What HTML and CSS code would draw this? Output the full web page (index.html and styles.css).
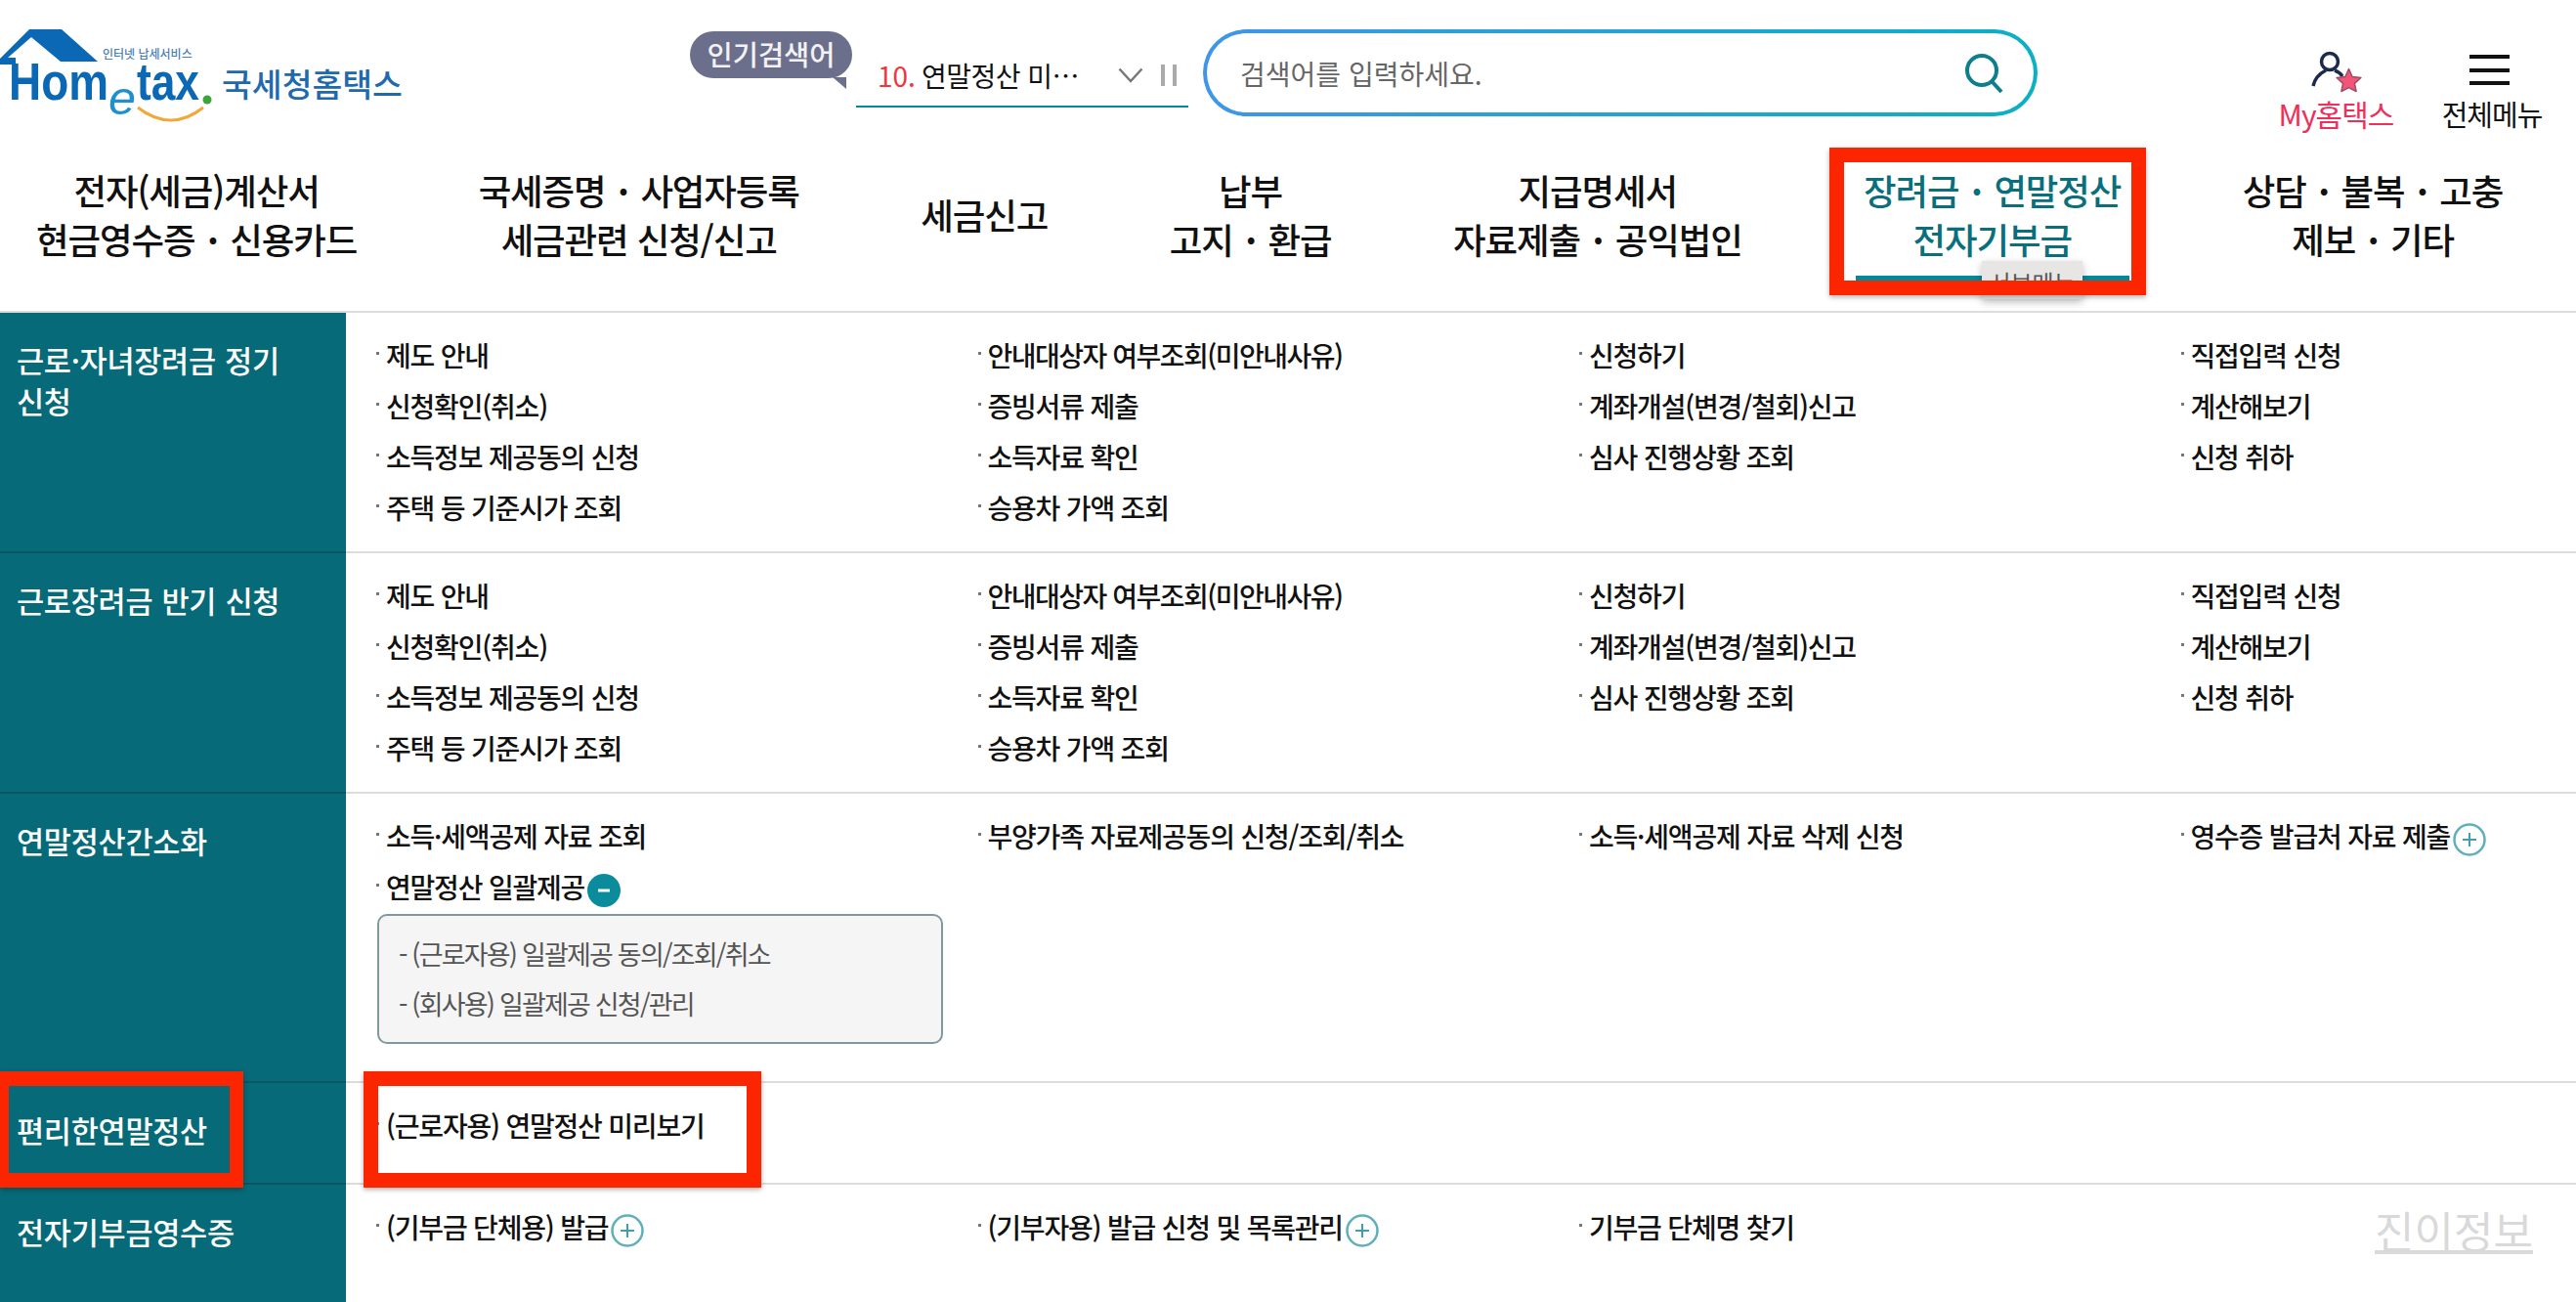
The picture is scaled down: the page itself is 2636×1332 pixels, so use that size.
FILE: index.html
```html
<!DOCTYPE html>
<html lang="ko">
<head>
<meta charset="utf-8">
<title>국세청홈택스</title>
<link rel="stylesheet" href="styles.css">
</head>
<body>
<header class="header">
  <div class="topbar">
    <a class="logo">
      <svg class="logo-mark" width="225" height="100" viewBox="0 0 225 100">
        <path class="roof" d="M0 30 L30 0 L63 0 L100 33 L62 33 L32 8 L8 29 L16 29 L16 36 L0 36Z"/>
        <text class="logo-small" x="105" y="30">인터넷 납세서비스</text>
        <text class="logo-word" x="9" y="72" textLength="102" lengthAdjust="spacingAndGlyphs">Hom</text>
        <text class="logo-e" x="111" y="87" textLength="28" lengthAdjust="spacingAndGlyphs">e</text>
        <text class="logo-word" x="140" y="72" textLength="64" lengthAdjust="spacingAndGlyphs">tax</text>
        <circle class="logo-dot" cx="212" cy="72" r="4.5"/>
        <path class="logo-smile" d="M141 80 Q175 106 208 80"/>
      </svg>
      <span class="logo-name">국세청홈택스</span>
    </a>
    <div class="badge">인기검색어</div>
    <div class="rolling">
      <span class="rank">10.</span><span class="rolling-text">연말정산 미…</span>
      <svg class="chev" width="26" height="16" viewBox="0 0 26 16"><path d="M1.500 1.500 L13 14 L24.500 1.500"/></svg>
      <span class="pause"></span>
    </div>
    <div class="search">
      <span class="placeholder">검색어를 입력하세요.</span>
      <svg class="search-icon" width="44" height="44" viewBox="0 0 44 44"><circle cx="20" cy="19" r="15"/><path d="M30 30 L40 41"/></svg>
    </div>
    <a class="util util-my">
      <svg width="54" height="43" viewBox="0 0 54 43">
        <circle class="my-line" cx="20" cy="11" r="8.500"/>
        <path class="my-line" d="M3 36 C5 27 10 23 16 20 M25 20 C28 21 31 23 33 26"/>
        <path class="my-star" d="M39.500 18.500 L43.100 26.500 L51.900 27.500 L45.400 33.400 L47.100 41.500 L39.500 37.700 L31.900 41.500 L33.600 33.400 L27.100 27.500 L35.900 26.500Z"/>
      </svg>
      <span>My홈택스</span>
    </a>
    <a class="util util-menu">
      <span class="burger"><i></i><i></i><i></i></span>
      <span>전체메뉴</span>
    </a>
  </div>
  <nav class="nav">
    <a class="nav-item">전자(세금)계산서<br>현금영수증<span class="sep">·</span>신용카드</a>
    <a class="nav-item">국세증명<span class="sep">·</span>사업자등록<br>세금관련 신청/신고</a>
    <a class="nav-item">세금신고</a>
    <a class="nav-item">납부<br>고지<span class="sep">·</span>환급</a>
    <a class="nav-item">지급명세서<br>자료제출<span class="sep">·</span>공익법인</a>
    <a class="nav-item active">장려금<span class="sep">·</span>연말정산<br>전자기부금<span class="tip">서브메뉴</span></a>
    <a class="nav-item">상담<span class="sep">·</span>불복<span class="sep">·</span>고충<br>제보<span class="sep">·</span>기타</a>
  </nav>
</header>
<main class="menu">
  <section class="row row-four">
    <h2 class="side">근로·자녀장려금 정기<br>신청</h2>
    <ul class="links">
      <li>제도 안내</li><li class="tight">안내대상자 여부조회(미안내사유)</li><li>신청하기</li><li>직접입력 신청</li>
      <li>신청확인(취소)</li><li>증빙서류 제출</li><li>계좌개설(변경/철회)신고</li><li>계산해보기</li>
      <li>소득정보 제공동의 신청</li><li>소득자료 확인</li><li>심사 진행상황 조회</li><li>신청 취하</li>
      <li>주택 등 기준시가 조회</li><li>승용차 가액 조회</li>
    </ul>
  </section>
  <section class="row row-four">
    <h2 class="side">근로장려금 반기 신청</h2>
    <ul class="links">
      <li>제도 안내</li><li class="tight">안내대상자 여부조회(미안내사유)</li><li>신청하기</li><li>직접입력 신청</li>
      <li>신청확인(취소)</li><li>증빙서류 제출</li><li>계좌개설(변경/철회)신고</li><li>계산해보기</li>
      <li>소득정보 제공동의 신청</li><li>소득자료 확인</li><li>심사 진행상황 조회</li><li>신청 취하</li>
      <li>주택 등 기준시가 조회</li><li>승용차 가액 조회</li>
    </ul>
  </section>
  <section class="row row-simple">
    <h2 class="side">연말정산간소화</h2>
    <ul class="links">
      <li>소득·세액공제 자료 조회</li><li>부양가족 자료제공동의 신청/조회/취소</li><li>소득·세액공제 자료 삭제 신청</li>
      <li>영수증 발급처 자료 제출<svg class="toggle" width="34" height="34" viewBox="0 0 34 34"><circle class="plus-ring" cx="17" cy="17" r="15.500"/><path class="plus-bar" d="M17 10 V24 M10 17 H24"/></svg></li>
      <li class="has-sub">연말정산 일괄제공<svg class="toggle" width="34" height="34" viewBox="0 0 34 34"><circle class="minus-disc" cx="17" cy="17" r="17"/><path class="minus-bar" d="M11 17 H23"/></svg>
        <ul class="sub">
          <li>(근로자용) 일괄제공 동의/조회/취소</li>
          <li>(회사용) 일괄제공 신청/관리</li>
        </ul>
      </li>
    </ul>
  </section>
  <section class="row row-one">
    <h2 class="side">편리한연말정산</h2>
    <ul class="links">
      <li>(근로자용) 연말정산 미리보기</li>
    </ul>
  </section>
  <section class="row row-last">
    <h2 class="side">전자기부금영수증</h2>
    <ul class="links">
      <li>(기부금 단체용) 발급<svg class="toggle" width="34" height="34" viewBox="0 0 34 34"><circle class="plus-ring" cx="17" cy="17" r="15.500"/><path class="plus-bar" d="M17 10 V24 M10 17 H24"/></svg></li>
      <li>(기부자용) 발급 신청 및 목록관리<svg class="toggle" width="34" height="34" viewBox="0 0 34 34"><circle class="plus-ring" cx="17" cy="17" r="15.500"/><path class="plus-bar" d="M17 10 V24 M10 17 H24"/></svg></li>
      <li>기부금 단체명 찾기</li>
    </ul>
  </section>
</main>
<div class="mark mark-nav"></div>
<div class="mark mark-side"></div>
<div class="mark mark-link"></div>
<div class="watermark">진이정보</div>
</body>
</html>
```

FILE: styles.css
```css
* { box-sizing: border-box; }
html, body { margin: 0; padding: 0; }
body {
  width: 2636px;
  height: 1332px;
  overflow: hidden;
  position: relative;
  display: flex;
  flex-direction: column;
  background: #fff;
  color: #111;
  font-family: "Noto Sans CJK KR", "Noto Sans", sans-serif;
}
ul { list-style: none; margin: 0; padding: 0; }
h2 { margin: 0; font: inherit; }

.header { flex: none; border-bottom: 2px solid #dcdcdc; height: 320px; }
.topbar { height: 151px; display: flex; align-items: flex-start; }

.logo { display: flex; align-items: flex-start; width: 706px; padding-top: 30px; }
.logo-mark { flex: none; }
.roof { fill: #0a68b5; }
.logo-small { font-size: 12px; fill: #4a7fb8; font-weight: 500; }
.logo-word { font-family: "Liberation Sans", sans-serif; font-weight: 700; font-size: 53px; fill: #0a68b5; }
.logo-e { font-family: "Liberation Sans", sans-serif; font-style: italic; font-size: 48px; fill: #1f8fd0; }
.logo-dot { fill: #3aa63a; }
.logo-smile { fill: none; stroke: #f3a73a; stroke-width: 3; }
.logo-name { margin: 30px 0 0 2px; font-size: 33.500px; line-height: 50px; font-weight: 500; color: #1f69ad; white-space: nowrap; }

.badge {
  position: relative;
  margin-top: 32px;
  width: 166px;
  height: 48px;
  border-radius: 24px;
  background: #6b6f8c;
  color: #f2f2f2;
  font-size: 28.500px;
  font-weight: 500;
  line-height: 46px;
  text-align: center;
  white-space: nowrap;
}
.badge::after {
  content: "";
  position: absolute;
  right: 6px;
  bottom: -11px;
  border-top: 12px solid #6b6f8c;
  border-left: 14px solid transparent;
}

.rolling {
  margin: 46px 0 0 4px;
  width: 340px;
  height: 64px;
  border-bottom: 2px solid #008a9c;
  display: flex;
  align-items: center;
  padding-left: 22px;
  font-size: 28px;
}
.rank { color: #f4333c; margin-right: 6px; }
.rolling-text { color: #111; width: 180px; white-space: nowrap; letter-spacing: -0.500px; }
.chev { margin-left: 21px; }
.chev path { fill: none; stroke: #777; stroke-width: 2.500; }
.pause { margin-left: 18px; width: 16px; height: 22px; border-left: 4px solid #aaa; border-right: 4px solid #aaa; }

.search {
  margin: 30px 0 0 15px;
  width: 854px;
  height: 89px;
  border: 4px solid transparent;
  border-radius: 45px;
  background: linear-gradient(#fff, #fff) padding-box, linear-gradient(90deg, #3f96e8, #0bb0c2) border-box;
  display: flex;
  align-items: center;
  justify-content: space-between;
  padding: 0 29px 0 34px;
}
.placeholder { color: #666; font-size: 28px; letter-spacing: 0; }
.search-icon circle, .search-icon path { fill: none; stroke: #0d7e8c; stroke-width: 4; }

.util { display: flex; flex-direction: column; align-items: center; font-size: 29px; letter-spacing: -1px; white-space: nowrap; margin-top: 52px; }
.util-my { margin-left: 246px; width: 119px; color: #ee2f5b; font-size: 30px; line-height: 42px; }
.util-my svg { display: block; }
.util-menu { margin-left: 49px; width: 102px; color: #111; line-height: 42px; }
.my-line { fill: none; stroke: #1c2a50; stroke-width: 3.500; }
.my-star { fill: #f2557a; stroke: #a34a60; stroke-width: 1.500; stroke-linejoin: round; }
.burger { display: flex; flex-direction: column; gap: 9.500px; width: 41px; margin: 4px 6px 8px 0; height: 31px; }
.burger i { display: block; height: 4px; background: #111; }

.nav {
  display: flex;
  align-items: center;
  gap: 124.500px;
  padding: 19px 0 0 37px;
  height: 119px;
}
.nav-item {
  position: relative;
  font-size: 36.500px;
  font-weight: 500;
  line-height: 50px;
  letter-spacing: -1.100px;
  text-align: center;
  white-space: nowrap;
}
.sep { margin: 0 12.500px; font-weight: 700; }
.nav-item.active { color: #0a6f7d; }
.nav-item.active::after {
  content: "";
  position: absolute;
  left: -8px;
  right: -9px;
  top: 112px;
  height: 7px;
  background: #008a9c;
}
.tip {
  position: absolute;
  z-index: 1;
  left: 121px;
  top: 97px;
  width: 103px;
  height: 39px;
  background: #e8e6e4;
  color: #555;
  font-size: 24px;
  font-weight: 400;
  line-height: 44px;
  letter-spacing: 0;
  box-shadow: 0 3px 8px rgba(0,0,0,.25);
}

.menu { flex: 1; display: flex; flex-direction: column; }
.row { display: grid; grid-template-columns: 354px 1fr; border-bottom: 2px solid #dcdcdc; }
.side {
  background: #066a78;
  color: #fff;
  font-size: 30.600px;
  font-weight: 500;
  line-height: 42px;
  padding: 27px 0 0 17px;
  letter-spacing: -0.300px;
  word-spacing: 1px;
  margin-bottom: -2px;
  border-bottom: 2px solid #0b5560;
  white-space: nowrap;
}
.links {
  display: grid;
  grid-template-columns: repeat(3, 615.500px) 1fr;
  align-content: start;
  padding: 17px 0 0 30px;
  font-size: 28px;
  font-weight: 500;
  line-height: 52px;
  letter-spacing: -1.200px;
}
.links > li { position: relative; padding-left: 11px; white-space: nowrap; }
.links > li::before {
  content: "";
  position: absolute;
  left: 1px;
  top: 23px;
  width: 3px;
  height: 3px;
  background: #777;
}
.links > .tight { letter-spacing: -1.500px; }
.toggle { vertical-align: middle; margin: 0 0 0 3px; position: relative; top: 0; }
.plus-ring { fill: #fff; stroke: #5fb0bb; stroke-width: 2.500; }
.plus-bar { stroke: #3f9fae; stroke-width: 2; fill: none; }
.minus-disc { fill: #0a8c9c; }
.minus-bar { stroke: #fff; stroke-width: 3; fill: none; }

.row-four { height: 246px; }
.row-simple { height: 296px; }
.row-one { height: 104px; }
.row-last { flex: 1; border-bottom: 0; }
.row-last .side { margin-bottom: 0; border-bottom: 0; }

.sub {
  margin: 2px 0 0 -9px;
  width: 579px;
  height: 133px;
  padding: 13px 0 0 20px;
  border: 2px solid #7f9a9f;
  border-radius: 10px;
  background: #f5f5f5;
  color: #555;
  font-size: 27px;
  font-weight: 400;
  line-height: 51px;
  letter-spacing: -1.800px;
}
.sub li::before { content: "- "; }

.mark { position: absolute; border: solid #fb2600; box-shadow: 0 2px 5px rgba(0,0,0,.3); z-index: 5; }
.mark-nav { left: 1872px; top: 151px; width: 324px; height: 151px; border-width: 15px; }
.mark-side { left: 0; top: 1096px; width: 249px; height: 119px; border-width: 15px 14px 15px 9px; }
.mark-link { left: 372px; top: 1096px; width: 407px; height: 119px; border-width: 15px; }

.watermark {
  position: absolute;
  left: 2430px;
  top: 1228px;
  font-size: 44px;
  line-height: 60px;
  color: #d9d9d9;
  text-decoration: underline;
  text-decoration-thickness: 4px;
  letter-spacing: 0;
}
```
